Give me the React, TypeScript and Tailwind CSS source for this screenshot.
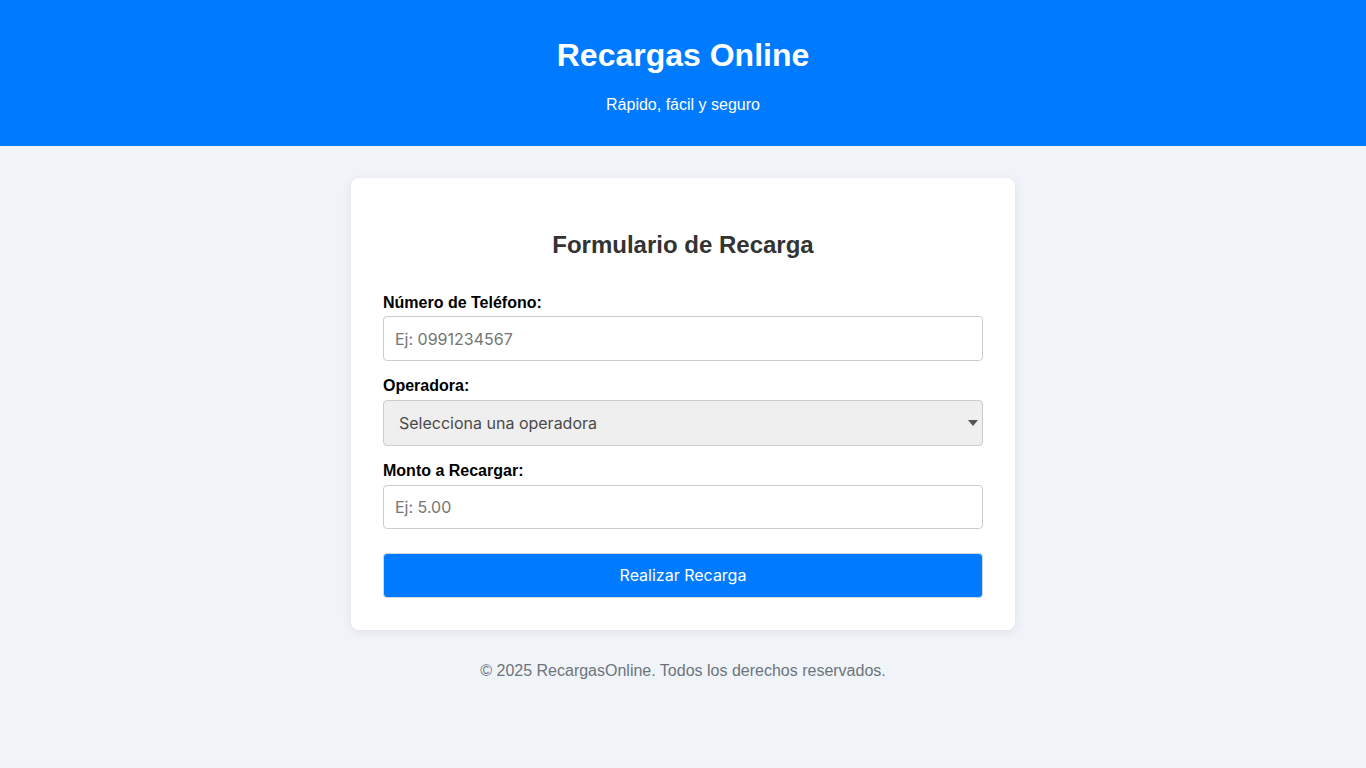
export default function App() {
  return (
    <div className="min-h-screen bg-[#f0f3f7] font-['Liberation_Sans',Arial,sans-serif]">
      {/* Header */}
      <header className="bg-[#007bff] text-white text-center pt-[36px] pb-[32px]">
        <h1 className="text-[32px] font-bold leading-[38px]">Recargas Online</h1>
        <p className="mt-[22px] text-[16px] leading-[18px]">Rápido, fácil y seguro</p>
      </header>

      {/* Form card */}
      <main className="flex justify-center pt-[32px]">
        <div className="w-[664px] bg-white rounded-lg shadow-[0_2px_10px_rgba(0,0,0,0.08)] px-[32px] pt-[53px] pb-[32px]">
          <h2 className="text-center text-[24px] font-bold leading-[28px] text-[#333]">Formulario de Recarga</h2>

          <form className="mt-[34px]" onSubmit={(e) => e.preventDefault()}>
            <div className="mb-[15px]">
              <label className="block text-[16px] font-bold leading-[18px] text-black pt-[1px] mb-[4px]">Número de Teléfono:</label>
              <input
                type="text"
                placeholder="Ej: 0991234567"
                className="block w-full h-[45px] px-[11px] border border-[#ccc] rounded-[4px] bg-white font-['Inter',sans-serif] text-[16px] text-[#333] placeholder:text-[#757575] outline-none"
              />
            </div>

            <div className="mb-[15px]">
              <label className="block text-[16px] font-bold leading-[18px] text-black pt-[1px] mb-[5px]">Operadora:</label>
              <div className="relative">
                <select
                  defaultValue=""
                  className="block w-full h-[46px] pl-[15px] pr-8 appearance-none border border-[#ccc] rounded-[4px] bg-[#efefef] font-['Inter',sans-serif] text-[16px] text-[#4a4a4a] outline-none"
                >
                  <option value="">Selecciona una operadora</option>
                  <option value="claro">Claro</option>
                  <option value="movistar">Movistar</option>
                  <option value="cnt">CNT</option>
                </select>
                <svg className="absolute right-[5px] top-[20px] pointer-events-none" width="10" height="6" viewBox="0 0 10 6">
                  <path d="M0 0h10L5 6z" fill="#555" />
                </svg>
              </div>
            </div>

            <div className="mb-[24px]">
              <label className="block text-[16px] font-bold leading-[18px] text-black pt-[1px] mb-[5px]">Monto a Recargar:</label>
              <input
                type="text"
                placeholder="Ej: 5.00"
                className="block w-full h-[44px] px-[11px] border border-[#ccc] rounded-[4px] bg-white font-['Inter',sans-serif] text-[16px] text-[#333] placeholder:text-[#757575] outline-none"
              />
            </div>

            <button
              type="submit"
              className="block w-full h-[45px] pb-[1px] bg-[#007bff] border border-[#cfd8e3] rounded-[4px] text-white font-['Inter',sans-serif] text-[16px]"
            >
              Realizar Recarga
            </button>
          </form>
        </div>
      </main>

      {/* Footer */}
      <footer className="text-center mt-[32px] text-[16px] leading-[18px] text-[#6c757d]">
        © 2025 RecargasOnline. Todos los derechos reservados.
      </footer>
    </div>
  );
}
